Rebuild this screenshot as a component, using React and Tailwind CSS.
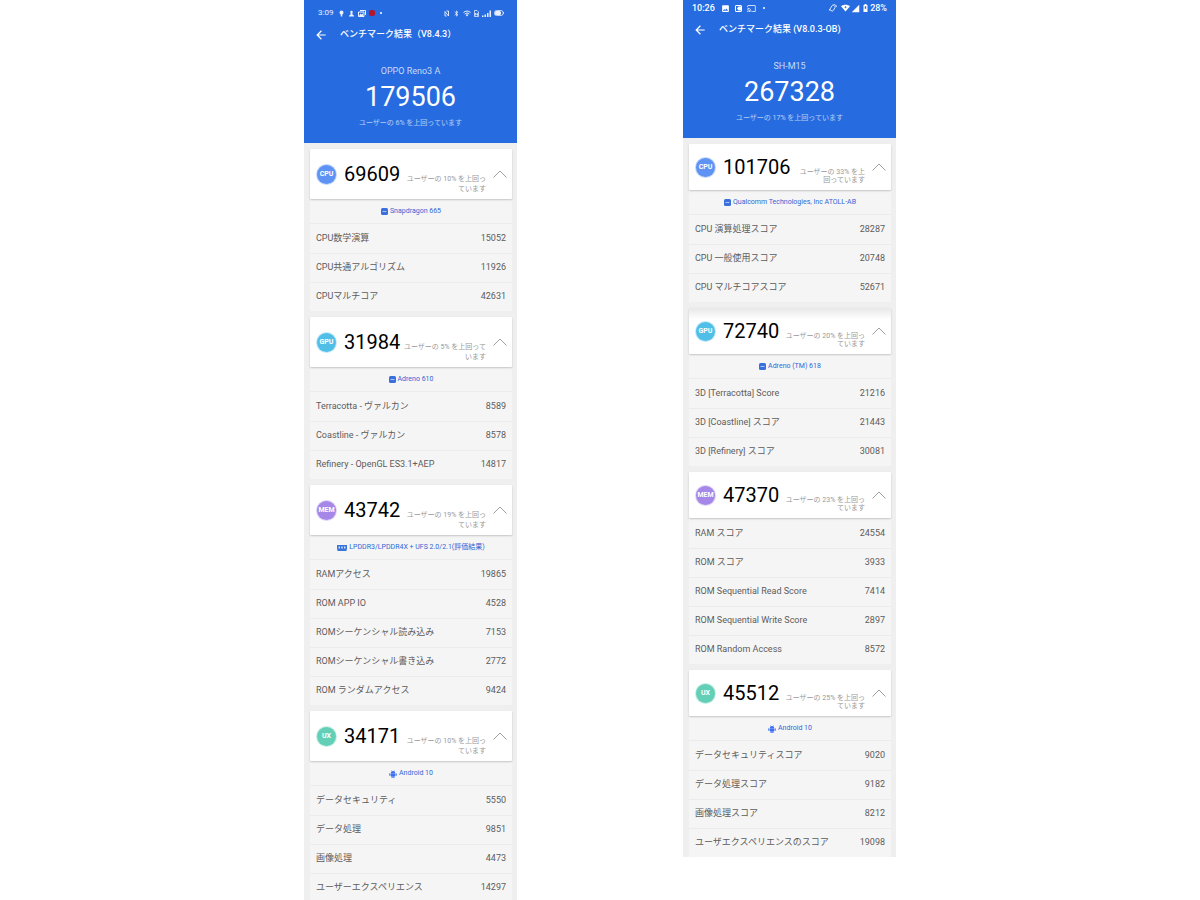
import React from "react";
import {
  MdArrowBack,
  MdBluetooth,
  MdImage,
  MdCast,
  MdSignalCellular4Bar,
} from "react-icons/md";

const badgeStyles = {
  CPU: "bg-[#5f93f3] ring-[#c3d8fb]",
  GPU: "bg-[#4fbfe8] ring-[#c4e9f7]",
  MEM: "bg-[#a487e6] ring-[#dfd4f7]",
  UX: "bg-[#63cfb6] ring-[#c9efe6]",
};

const left = {
  version: "ベンチマーク結果（V8.4.3）",
  device: "OPPO Reno3 A",
  total: "179506",
  summary: "ユーザーの 6% を上回っています",
  sections: [
    {
      id: "CPU",
      score: "69609",
      note: ["ユーザーの 10% を上回っ", "ています"],
      info: "Snapdragon 665",
      icon: "chip",
      rows: [
        ["CPU数学演算", "15052"],
        ["CPU共通アルゴリズム", "11926"],
        ["CPUマルチコア", "42631"],
      ],
    },
    {
      id: "GPU",
      score: "31984",
      note: ["ユーザーの 5% を上回って", "います"],
      info: "Adreno 610",
      icon: "chip",
      rows: [
        ["Terracotta - ヴァルカン", "8589"],
        ["Coastline - ヴァルカン", "8578"],
        ["Refinery - OpenGL ES3.1+AEP", "14817"],
      ],
    },
    {
      id: "MEM",
      score: "43742",
      note: ["ユーザーの 19% を上回っ", "ています"],
      info: "LPDDR3/LPDDR4X + UFS 2.0/2.1(評価結果)",
      icon: "ram",
      rows: [
        ["RAMアクセス", "19865"],
        ["ROM APP IO", "4528"],
        ["ROMシーケンシャル読み込み", "7153"],
        ["ROMシーケンシャル書き込み", "2772"],
        ["ROM ランダムアクセス", "9424"],
      ],
    },
    {
      id: "UX",
      score: "34171",
      note: ["ユーザーの 10% を上回っ", "ています"],
      info: "Android 10",
      icon: "android",
      rows: [
        ["データセキュリティ", "5550"],
        ["データ処理", "9851"],
        ["画像処理", "4473"],
        ["ユーザーエクスペリエンス", "14297"],
      ],
    },
  ],
};

const right = {
  version: "ベンチマーク結果 (V8.0.3-OB)",
  device: "SH-M15",
  total: "267328",
  summary: "ユーザーの 17% を上回っています",
  sections: [
    {
      id: "CPU",
      score: "101706",
      note: ["ユーザーの 33% を上", "回っています"],
      info: "Qualcomm Technologies, Inc ATOLL-AB",
      icon: "chip",
      rows: [
        ["CPU 演算処理スコア", "28287"],
        ["CPU 一般使用スコア", "20748"],
        ["CPU マルチコアスコア", "52671"],
      ],
    },
    {
      id: "GPU",
      score: "72740",
      note: ["ユーザーの 20% を上回っ", "ています"],
      info: "Adreno (TM) 618",
      icon: "chip",
      shaded: true,
      rows: [
        ["3D [Terracotta] Score", "21216"],
        ["3D [Coastline] スコア", "21443"],
        ["3D [Refinery] スコア", "30081"],
      ],
    },
    {
      id: "MEM",
      score: "47370",
      note: ["ユーザーの 23% を上回っ", "ています"],
      rows: [
        ["RAM スコア", "24554"],
        ["ROM スコア", "3933"],
        ["ROM Sequential Read Score", "7414"],
        ["ROM Sequential Write Score", "2897"],
        ["ROM Random Access", "8572"],
      ],
    },
    {
      id: "UX",
      score: "45512",
      note: ["ユーザーの 25% を上回っ", "ています"],
      info: "Android 10",
      icon: "android",
      rows: [
        ["データセキュリティスコア", "9020"],
        ["データ処理スコア", "9182"],
        ["画像処理スコア", "8212"],
        ["ユーザエクスペリエンスのスコア", "19098"],
      ],
    },
  ],
};

function InfoIcon({ kind }) {
  if (kind === "android")
    return (
      <svg viewBox="0 0 16 16" className="size-2" fill="#3d6ff2" aria-hidden="true">
        <path d="M3.500 6a4.500 4 0 0 1 9 0z" />
        <path d="M5 1l1.500 2M11 1L9.500 3" stroke="#3d6ff2" strokeWidth="1.200" />
        <rect x="3.500" y="6.500" width="9" height="6" rx="1" />
        <rect x="0.500" y="6.500" width="2.300" height="5" rx="1.100" />
        <rect x="13.200" y="6.500" width="2.300" height="5" rx="1.100" />
        <rect x="5" y="11" width="2.400" height="5" rx="1" />
        <rect x="8.600" y="11" width="2.400" height="5" rx="1" />
      </svg>
    );
  if (kind === "ram")
    return (
      <svg viewBox="0 0 20 12" className="h-[6px] w-[10px]" aria-hidden="true">
        <path d="M0 0h20v9h-1v3h-18v-3H0z" fill="#3b74d8" />
        <path d="M3 3h3v4H3zM8.500 3h3v4h-3zM14 3h3v4h-3z" fill="#cfdef8" />
      </svg>
    );
  return (
    <svg viewBox="0 0 14 14" className="size-[7px]" aria-hidden="true">
      <rect width="14" height="14" rx="3" fill="#3b6fdc" />
      <path d="M3 6h8v2H3z" fill="#a9c3f5" />
    </svg>
  );
}

function LeftStatus() {
  return (
    <div className="flex h-[10px] items-center justify-between pr-[13px] pl-[14px] text-[8px] leading-[10px] text-white/90">
      <div className="flex items-center gap-[3px]">
        <span className="mr-[2px]">3:09</span>
        <svg viewBox="0 0 14 14" className="size-[7px]" fill="currentColor" aria-hidden="true">
          <path d="M7 1a4 4 0 0 1 4 4c0 2-1.500 3-2.500 4.500V13h-3V9.500C4.500 8 3 7 3 5a4 4 0 0 1 4-4z" />
        </svg>
        <svg viewBox="0 0 14 14" className="size-[7px]" fill="currentColor" aria-hidden="true">
          <circle cx="7" cy="4" r="2.500" />
          <path d="M5.500 6h3l1 4 2.500 1v2H2v-2l2.500-1z" />
        </svg>
        <svg viewBox="0 0 16 14" className="h-[7px] w-2" aria-hidden="true">
          <path d="M4 1h11v9M1 4h11v9H1z" fill="none" stroke="currentColor" strokeWidth="2" />
          <path d="M2 12l3-5 2 2 2-2 2 5z" fill="currentColor" />
        </svg>
        <span className="size-[6px] rounded-[2px] bg-[#b5152d]" />
        <span className="ml-[2px] size-[2px] rounded-full bg-white" />
      </div>
      <div className="flex items-center gap-[3px]">
        <svg viewBox="0 0 12 14" className="h-[7px] w-[6px]" fill="none" stroke="currentColor" strokeWidth="1.800" aria-hidden="true">
          <path d="M2 12V3l7 9V2M5 2h4M2 12h3" />
        </svg>
        <MdBluetooth className="size-[7px]" />
        <svg viewBox="0 0 16 14" className="h-[7px] w-2" fill="none" stroke="currentColor" strokeWidth="2" aria-hidden="true">
          <path d="M1 5a10 10 0 0 1 14 0M3.500 8a6.500 6.500 0 0 1 9 0" />
          <path d="M5.500 10a3.500 3.500 0 0 1 5 0L8 13z" fill="currentColor" stroke="none" />
        </svg>
        <svg viewBox="0 0 10 14" className="h-[7px] w-[5px]" fill="none" stroke="currentColor" strokeWidth="1.500" aria-hidden="true">
          <path d="M1 1h5l3 3v9H1zM3 11V6l4 5V6" />
        </svg>
        <svg viewBox="0 0 18 14" className="h-[7px] w-[9px]" fill="currentColor" aria-hidden="true">
          <path d="M0 11h3v3H0zM5 9h3v5H5zM10 6h3v8h-3zM15 1h3v13h-3z" />
        </svg>
        <svg viewBox="0 0 20 12" className="h-[6px] w-[10px]" aria-hidden="true">
          <rect x="1" y="1" width="17" height="10" rx="4" fill="none" stroke="currentColor" strokeWidth="1.500" />
          <rect x="2" y="2" width="12" height="8" rx="3" fill="currentColor" />
          <path d="M19 4v4" stroke="currentColor" strokeWidth="1.500" />
        </svg>
      </div>
    </div>
  );
}

function RightStatus() {
  return (
    <div className="flex h-[10px] items-center justify-between px-[9px] text-[9px] leading-[10px] text-white">
      <div className="flex items-center gap-[5px]">
        <span className="mr-px font-medium">10:26</span>
        <MdImage className="size-[9px]" />
        <svg viewBox="0 0 14 14" className="size-[7px]" aria-hidden="true">
          <rect x="1" y="1" width="12" height="12" rx="1" fill="none" stroke="currentColor" strokeWidth="2" />
          <path d="M7 3h5v8H7l-3-4z" fill="currentColor" />
        </svg>
        <MdCast className="size-[9px]" />
        <span className="ml-[2px] size-[2px] rounded-full bg-white" />
      </div>
      <div className="flex items-center gap-px">
        <svg viewBox="0 0 16 16" className="mr-[3px] size-2" fill="none" stroke="currentColor" strokeWidth="1.500" aria-hidden="true">
          <rect x="4" y="3" width="7" height="11" rx="2" transform="rotate(30 8 8)" />
          <path d="M9 1c3-.5 6 1.500 6 5M1 10c0 2 .5 3.500 2 4.500" />
        </svg>
        <svg viewBox="0 0 18 16" className="h-2 w-[9px]" aria-hidden="true">
          <path d="M9 15L0 4.500C5 .5 13 .5 18 4.500z" fill="currentColor" />
          <path d="M9 4.500v4M7 6.500h4" stroke="#266ce0" strokeWidth="1.500" />
        </svg>
        <MdSignalCellular4Bar className="size-[9px]" />
        <svg viewBox="0 0 10 16" className="mr-px ml-[2px] h-2 w-[5px]" aria-hidden="true">
          <path d="M3 0h4v2h2v14H1V2h2z" fill="currentColor" />
          <path d="M3.500 4.500h3v5h-3z" fill="#266ce0" />
        </svg>
        <span className="font-medium">28%</span>
      </div>
    </div>
  );
}

function Section({ data, compact }) {
  return (
    <section className="flex flex-col">
      <button
        type="button"
        aria-expanded="true"
        className={
          "relative flex w-full items-center rounded-[1px] pl-[7px] text-left shadow-[0_1px_2px_rgba(0,0,0,0.2)] " +
          (compact ? "h-[46px] " : "h-[50px] ") +
          (data.shaded ? "bg-linear-to-b from-[#e8e8e8] to-white to-25%" : "bg-white")
        }
      >
        <span
          className={
            "flex size-[19px] shrink-0 items-center justify-center rounded-full text-[7px] font-bold text-white ring-1 " +
            badgeStyles[data.id]
          }
        >
          {data.id}
        </span>
        <span className="ml-2 text-[20px] leading-6 text-black">{data.score}</span>
        <span
          className={
            "flex flex-1 flex-col self-end pr-[7px] text-right text-[7px] whitespace-nowrap text-[#999] " +
            (compact ? "pb-[6px] leading-[8px]" : "pb-[5px] leading-[10px]")
          }
        >
          {data.note.map((line) => (
            <span key={line}>{line}</span>
          ))}
        </span>
        <svg viewBox="0 0 14 8" className="mr-[5px] h-2 w-[14px] shrink-0" fill="none" stroke="#a0a0a0" aria-hidden="true">
          <path d="M0.500 7.500L7 1l6.500 6.500" />
        </svg>
      </button>
      <div className="bg-[#f6f5f5] pt-px">
        {data.info && (
          <p className="flex h-6 items-center justify-center gap-[2px] border-b border-[#ececec] text-[7px] text-[#2f66d6]">
            <InfoIcon kind={data.icon} />
            {data.info}
          </p>
        )}
        <table className="w-full border-collapse text-[9px] text-[#5c5c5c]">
          <tbody>
            {data.rows.map(([name, value]) => (
              <tr key={name} className="h-[29px] border-b border-[#ececec] last:border-b-0">
                <th scope="row" className="p-0 pl-[6px] text-left font-normal whitespace-nowrap">
                  {name}
                </th>
                <td className="p-0 pr-[6px] text-right">{value}</td>
              </tr>
            ))}
          </tbody>
        </table>
      </div>
    </section>
  );
}

function Phone({ data, status, compact }) {
  return (
    <article className="min-w-0 self-start bg-[#efefef]">
      <header
        className={
          "flex flex-col bg-[#266ce0] text-white " + (compact ? "h-[138px] pt-[3px]" : "h-[143px] pt-[8px]")
        }
      >
        {status}
        <div className="mt-[9px] flex h-4 items-center pl-[10px]">
          <button type="button" aria-label="戻る">
            <MdArrowBack className="size-[14px]" />
          </button>
          <h1 className="ml-3 text-[9px] font-medium whitespace-nowrap">{data.version}</h1>
        </div>
        <div className="mt-[22px] flex flex-col items-center">
          <p className="text-[9px] leading-[12px] text-white/75">{data.device}</p>
          <p className="mt-1 text-[27px] leading-8">{data.total}</p>
          <p className="mt-1 text-[7px] leading-[12px] text-white/65">{data.summary}</p>
        </div>
      </header>
      <div className="flex flex-col gap-[6px] pt-[6px] pr-[5px] pl-[6px]">
        {data.sections.map((s) => (
          <Section key={s.id} data={s} compact={compact} />
        ))}
      </div>
    </article>
  );
}

export default function App() {
  return (
    <main
      lang="ja"
      className="min-h-screen bg-white font-['Roboto','Noto_Sans_CJK_JP',sans-serif]"
    >
      <div className="mx-auto grid max-w-[592px] grid-cols-[213fr_213fr] gap-[166px]">
        <Phone data={left} status={<LeftStatus />} />
        <Phone data={right} status={<RightStatus />} compact />
      </div>
    </main>
  );
}
